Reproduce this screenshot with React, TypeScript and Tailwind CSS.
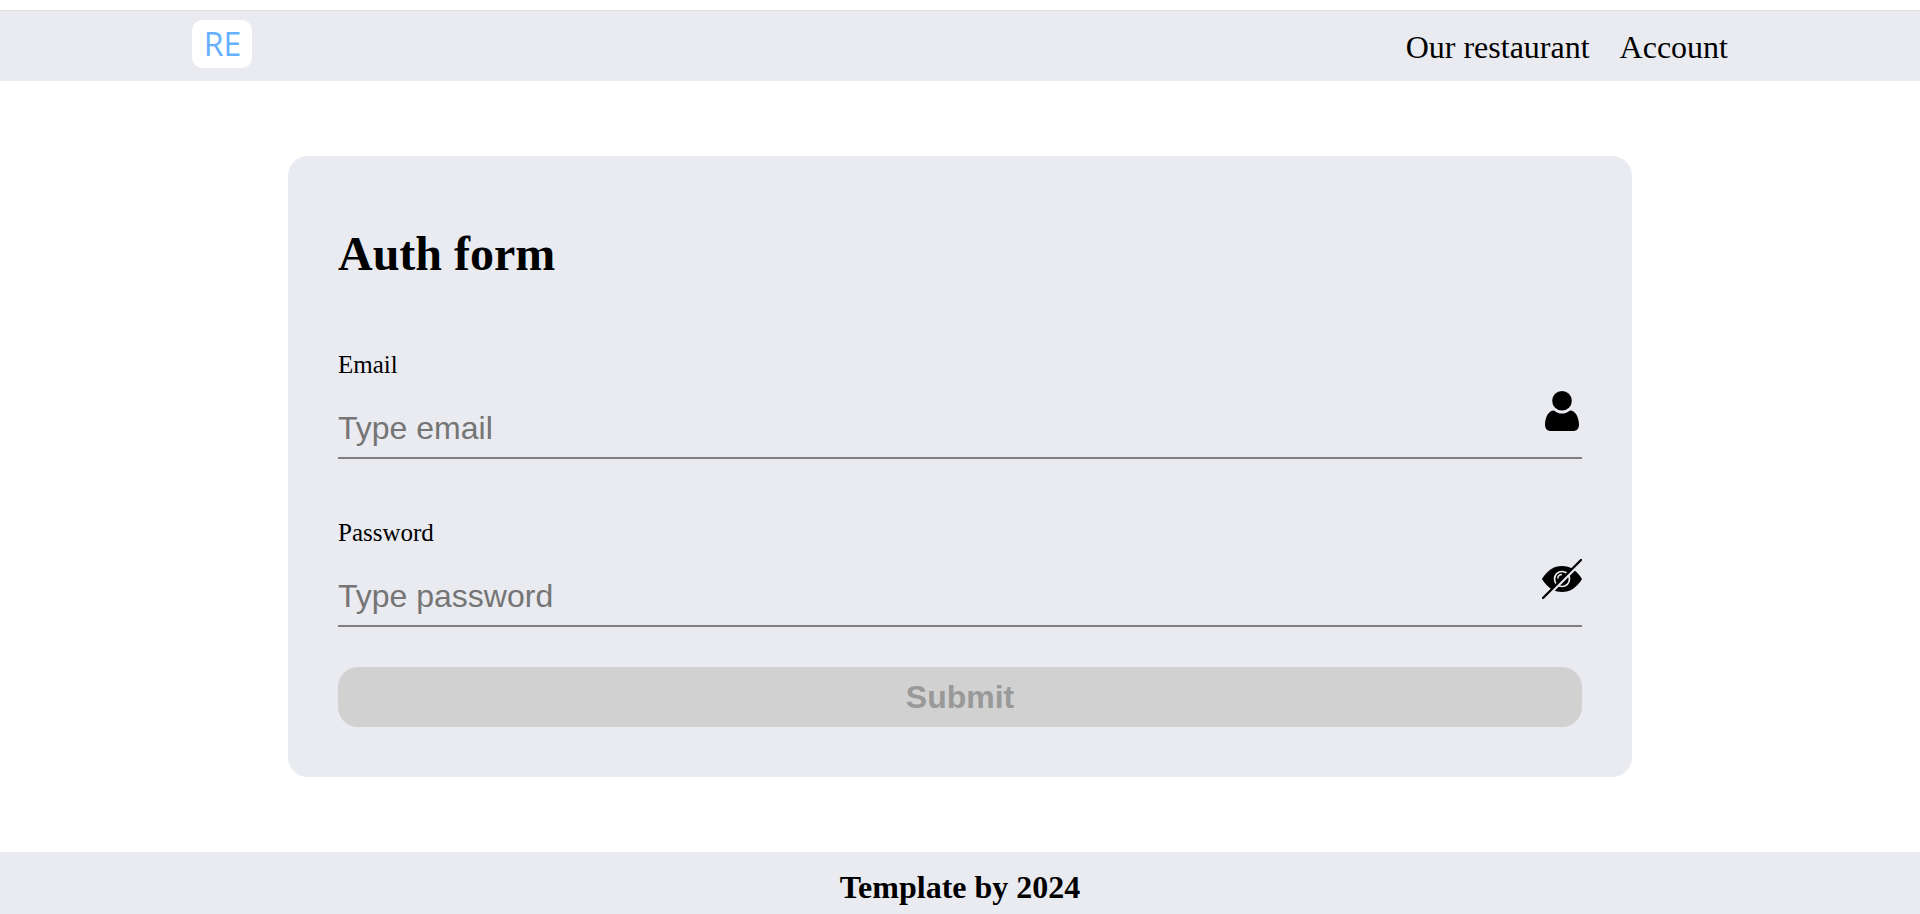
import { useState, type ReactNode } from "react";

function Logo() {
  return (
    <a
      href="#"
      className="flex h-12 w-15 items-center justify-center rounded-[10px] bg-white pl-px font-['Open_Sans',sans-serif] text-[32px] leading-none text-[#66b0ff]"
    >
      RE
    </a>
  );
}

function UserIcon() {
  return (
    <svg viewBox="0 0 40 40" className="size-10" aria-hidden="true">
      <circle cx="20" cy="9.8" r="9.8" />
      <path d="M12 19.400C14.200 21.300 17 22.600 20 22.600S25.800 21.300 28 19.400C33.800 19.400 37 27 37 33.500C37 38 34.500 40 31 40H9C5.500 40 3 38 3 33.500C3 27 6.200 19.400 12 19.400Z" />
    </svg>
  );
}

function EyeOffIcon() {
  return (
    <svg viewBox="0 0 40 40" className="size-10" aria-hidden="true">
      <path d="M0 20C5 11.500 12 7 20 7S35 11.500 40 20C35 28.500 28 33 20 33S5 28.500 0 20Z" />
      <circle cx="20" cy="20" r="7.500" fill="none" stroke="#e9ebf0" strokeWidth="1.700" />
      <path d="M15.800 19.500A4.200 4.200 0 0 1 20 15.600" fill="none" stroke="#e9ebf0" strokeWidth="1.500" />
      <path d="M2.500 39.500L39.500 2.500" stroke="#e9ebf0" strokeWidth="3.500" />
      <path d="M1 39L39 1" stroke="#000" strokeWidth="2.300" strokeLinecap="round" />
    </svg>
  );
}

type FieldProps = {
  id: string;
  label: string;
  type: string;
  placeholder: string;
  value: string;
  onChange: (value: string) => void;
  adornment: ReactNode;
};

function Field({ id, label, type, placeholder, value, onChange, adornment }: FieldProps) {
  return (
    <div className="relative flex flex-col gap-5">
      <label htmlFor={id} className="text-[25px] leading-7">
        {label}
      </label>
      <input
        id={id}
        type={type}
        placeholder={placeholder}
        value={value}
        onChange={(e) => onChange(e.target.value)}
        className="h-15 w-full border-b-2 border-[#808080] bg-transparent pr-12 font-['Liberation_Sans',Arial,sans-serif] text-[32px] outline-none placeholder:text-[#757575]"
      />
      <div className="absolute right-0 bottom-7 flex">{adornment}</div>
    </div>
  );
}

export default function App() {
  const [email, setEmail] = useState("");
  const [password, setPassword] = useState("");
  const [visible, setVisible] = useState(false);

  return (
    <div className="flex min-h-screen flex-col bg-white pt-2.5 font-['Liberation_Serif','Times_New_Roman',serif] text-black">
      <header className="border-t border-[#dddddd] bg-[#e9ebf0]">
        <div className="mx-auto flex w-4/5 items-start justify-between pt-[9px] pb-[13px]">
          <Logo />
          <nav className="flex gap-[30px] pt-[9px] text-[32px] leading-9">
            <a href="#">Our restaurant</a>
            <a href="#">Account</a>
          </nav>
        </div>
      </header>

      <main className="mx-auto w-7/10 py-[75px]">
        <form className="rounded-[20px] bg-[#e9ebf0] p-[50px]" onSubmit={(e) => e.preventDefault()}>
          <h1 className="pt-5 text-5xl leading-14 font-bold">Auth form</h1>
          <div className="mt-[69px] flex flex-col gap-15">
            <Field
              id="email"
              label="Email"
              type="email"
              placeholder="Type email"
              value={email}
              onChange={setEmail}
              adornment={<UserIcon />}
            />
            <Field
              id="password"
              label="Password"
              type={visible ? "text" : "password"}
              placeholder="Type password"
              value={password}
              onChange={setPassword}
              adornment={
                <button type="button" aria-label="Toggle password visibility" onClick={() => setVisible(!visible)}>
                  <EyeOffIcon />
                </button>
              }
            />
          </div>
          <button
            type="submit"
            disabled={!email || !password}
            className="mt-10 h-15 w-full rounded-[20px] bg-[#d1d1d1] font-['Liberation_Sans',Arial,sans-serif] text-[32px] leading-9 font-bold text-black disabled:text-[#999999]"
          >
            Submit
          </button>
        </form>
      </main>

      <footer className="flex-1 bg-[#e9ebf0] pt-[17px] text-center text-[32px] leading-9 font-bold">
        Template by 2024
      </footer>
    </div>
  );
}
